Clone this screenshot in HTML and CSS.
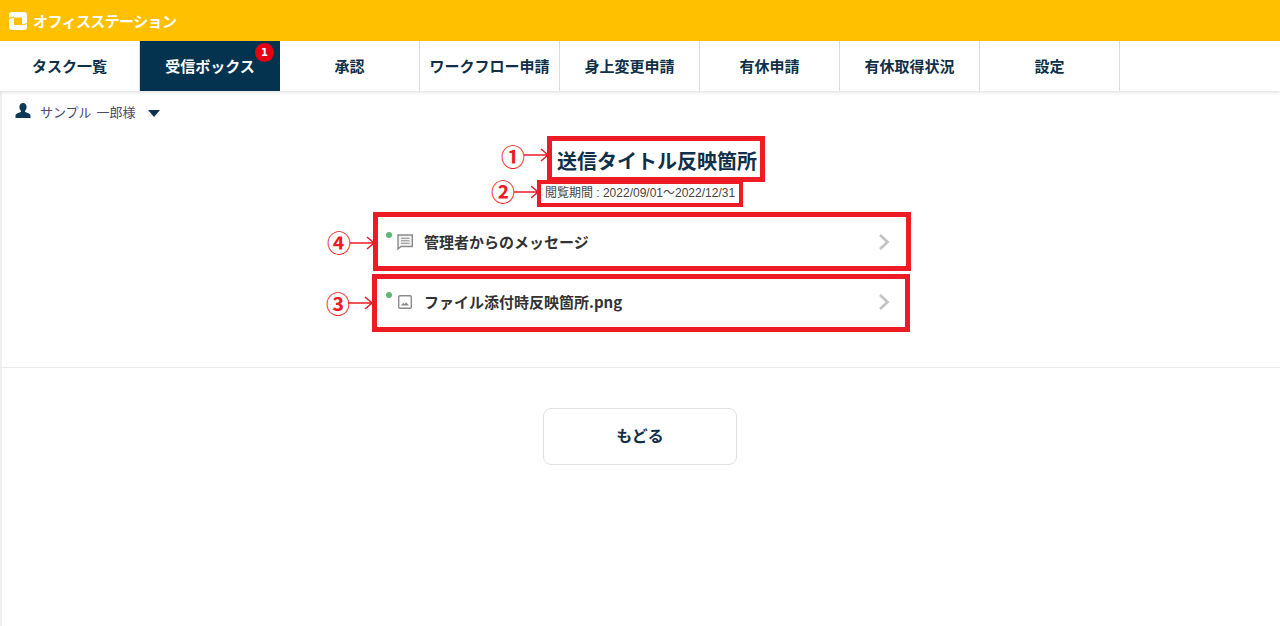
FILE: index.html
```html
<!DOCTYPE html>
<html lang="ja">
<head>
<meta charset="utf-8">
<title>オフィスステーション</title>
<link rel="stylesheet" href="styles.css">
</head>
<body>
<div class="page">
  <header class="topbar">
    <svg class="logo" width="20" height="20" viewBox="0 0 20 20"><path fill="#fff" fill-rule="evenodd" d="M4 1h12a3 3 0 0 1 3 3v12a3 3 0 0 1-3 3H4a3 3 0 0 1-3-3V4a3 3 0 0 1 3-3zM6 6.500v7.500h8V6.500z"/><path fill="none" stroke="#ffc000" stroke-width="1.300" d="M1 7.500L6 6M14 14l5-1.500"/></svg>
    <span class="brand">オフィスステーション</span>
  </header>
  <nav class="tabs">
    <a class="tab">タスク一覧</a>
    <a class="tab active">受信ボックス<span class="badge">1</span></a>
    <a class="tab">承認</a>
    <a class="tab">ワークフロー申請</a>
    <a class="tab">身上変更申請</a>
    <a class="tab">有休申請</a>
    <a class="tab">有休取得状況</a>
    <a class="tab">設定</a>
  </nav>
  <div class="user">
    <svg class="user-ic" width="16" height="15" viewBox="0 0 16 15"><path fill="#0f3a55" d="M8 0c2.300 0 3.600 1.700 3.600 4 0 1.600-.7 3-1.500 3.800v1.300c1.800.7 5.400 1.500 5.400 3.400V15H.5v-2.500c0-1.900 3.600-2.700 5.400-3.400V7.800C5.100 7 4.400 5.600 4.400 4 4.400 1.700 5.700 0 8 0z"/></svg>
    <span class="user-name">サンプル 一郎様</span>
    <span class="caret"></span>
  </div>
  <main class="content">
    <h1 class="title">送信タイトル反映箇所</h1>
    <p class="period">閲覧期間 : 2022/09/01～2022/12/31</p>
    <ul class="list">
      <li class="item">
        <span class="dot"></span>
        <svg class="ic" width="18" height="18" viewBox="0 0 18 18"><path fill="#f2f2f2" stroke="#8a8a8a" stroke-width="1.400" d="M2 2h14.300v11.500H5L2 16z"/><path fill="none" stroke="#8a8a8a" stroke-width="1.100" d="M5 5.300h8.500M5 7.800h8.500M5 10.300h8.500"/></svg>
        <span class="item-text">管理者からのメッセージ</span>
        <svg class="chev" width="12" height="18" viewBox="0 0 12 18"><path fill="none" stroke="#c4c4c4" stroke-width="2.600" d="M2 2l7.500 7L2 16"/></svg>
      </li>
      <li class="item second">
        <span class="dot"></span>
        <svg class="ic" width="18" height="18" viewBox="0 0 18 18"><rect x="2.700" y="2.700" width="12.600" height="12.600" rx="1.200" fill="#fff" stroke="#8a8a8a" stroke-width="1.400"/><path fill="#8a8a8a" d="M5 12.500l2.200-2.800 1.400 1.500 1.500-2 2.900 3.300z"/></svg>
        <span class="item-text">ファイル添付時反映箇所.png</span>
        <svg class="chev" width="12" height="18" viewBox="0 0 12 18"><path fill="none" stroke="#c4c4c4" stroke-width="2.600" d="M2 2l7.500 7L2 16"/></svg>
      </li>
    </ul>
  </main>
  <div class="actions">
    <button class="back">もどる</button>
  </div>

  <div class="anno box b1"></div>
  <div class="anno box b2"></div>
  <div class="anno box b4"></div>
  <div class="anno box b3"></div>

  <span class="anno num n1">①</span>
  <span class="anno num n2">②</span>
  <span class="anno num n4">④</span>
  <span class="anno num n3">③</span>

  <svg class="anno arrow a1" width="26" height="14" viewBox="0 0 26 14"><path d="M0 7h24M17 1l7 6-7 6" fill="none" stroke="#ed1c24" stroke-width="1.500"/></svg>
  <svg class="anno arrow a2" width="26" height="14" viewBox="0 0 26 14"><path d="M0 7h24M17 1l7 6-7 6" fill="none" stroke="#ed1c24" stroke-width="1.500"/></svg>
  <svg class="anno arrow a4" width="26" height="14" viewBox="0 0 26 14"><path d="M0 7h24M17 1l7 6-7 6" fill="none" stroke="#ed1c24" stroke-width="1.500"/></svg>
  <svg class="anno arrow a3" width="26" height="14" viewBox="0 0 26 14"><path d="M0 7h24M17 1l7 6-7 6" fill="none" stroke="#ed1c24" stroke-width="1.500"/></svg>
</div>
</body>
</html>
```

FILE: styles.css
```css
* { box-sizing: border-box; }
html, body { margin: 0; padding: 0; height: 100%; overflow: hidden; background: #fff; }
body { font-family: "Liberation Sans", "Noto Sans CJK JP", sans-serif; color: #0f3048; }
.page { position: relative; height: 626px; box-shadow: inset 2px 0 #f0f0f0; }

.topbar { height: 41px; background: #ffc000; display: flex; align-items: center; padding: 0 0 0 8px; gap: 5px; }
.logo { flex: none; }
.brand { color: #fff; font-family: "Noto Sans CJK JP", sans-serif; font-size: 15px; line-height: 20px; font-weight: 700; letter-spacing: -0.6px; }

.tabs { display: flex; height: 50px; background: #fff; box-shadow: 0 2px 3px rgba(0, 0, 0, 0.1); }
.tab { position: relative; flex: none; width: 140px; display: flex; align-items: center; justify-content: center; padding-bottom: 2px; font-family: "Noto Sans CJK JP", sans-serif; font-size: 15px; font-weight: 700; color: #0f3048; border-right: 1px solid #dcdcdc; }
.tab.active { background: #03334f; color: #fff; border-right: 0; }
.badge { position: absolute; top: 2px; right: 6px; width: 19px; height: 19px; border-radius: 50%; background: #e60012; color: #fff; font-family: "DejaVu Sans", sans-serif; font-size: 10px; font-weight: 700; display: flex; align-items: center; justify-content: center; }

.user { display: flex; align-items: center; height: 42px; padding-left: 15px; }
.user-ic { margin-top: -4px; }
.user-name { margin-left: 9px; margin-top: -1px; font-family: "Noto Sans CJK JP", sans-serif; font-size: 13px; word-spacing: 2px; color: #4a4a6a; }
.caret { margin-left: 12px; margin-top: 2px; border-left: 6px solid transparent; border-right: 6px solid transparent; border-top: 7px solid #0f3048; }

.content { height: 235px; border-bottom: 1px solid #ebebeb; display: flex; flex-direction: column; align-items: center; }
.title { margin: 13px 0 0 34px; font-family: "Noto Sans CJK JP", sans-serif; font-size: 20px; line-height: 30px; font-weight: 700; color: #0f3048; text-align: center; }
.period { margin: 9px 0 0; font-size: 12px; line-height: 16px; color: #444; text-align: center; }
.list { list-style: none; margin: 15px 0 0; padding: 0; width: 528px; }
.item { position: relative; display: flex; align-items: center; height: 50px; padding: 0 14px 0 20px; background: #fff; border-radius: 6px; }
.item.second { margin-top: 10px; }
.dot { position: absolute; left: 10px; top: 16px; width: 6px; height: 6px; border-radius: 50%; background: #5cb874; }
.ic { flex: none; margin-top: 2px; }
.item-text { flex: 1; margin-left: 10px; font-family: "Noto Sans CJK JP", sans-serif; font-size: 15px; font-weight: 700; color: #333; }
.chev { flex: none; margin-top: 2px; }

.actions { display: flex; justify-content: center; padding-top: 40px; }
.back { width: 194px; height: 57px; padding: 0 0 4px; background: #fff; border: 1.5px solid #e2e2e2; border-radius: 8px; font-family: "Noto Sans CJK JP", sans-serif; font-size: 16px; font-weight: 700; color: #0f3048; }

.anno { position: absolute; }
.box { border: 5px solid #ed1c24; }
.b1 { left: 547px; top: 136px; width: 218px; height: 46px; }
.b2 { left: 537px; top: 180px; width: 206px; height: 27px; border-width: 4px; }
.b4 { left: 373px; top: 212px; width: 538px; height: 59px; }
.b3 { left: 372px; top: 274px; width: 538px; height: 58px; }
.num { font-family: "Noto Sans CJK JP", sans-serif; font-size: 24px; line-height: 24px; color: #ed1c24; font-weight: 700; }
.n1 { left: 501px; top: 144px; }
.n2 { left: 491px; top: 179px; }
.n4 { left: 327px; top: 230px; }
.n3 { left: 326px; top: 291px; }
.a1 { left: 524px; top: 148px; }
.a2 { left: 514px; top: 185px; }
.a4 { left: 350px; top: 236px; }
.a3 { left: 348px; top: 296px; }
```
